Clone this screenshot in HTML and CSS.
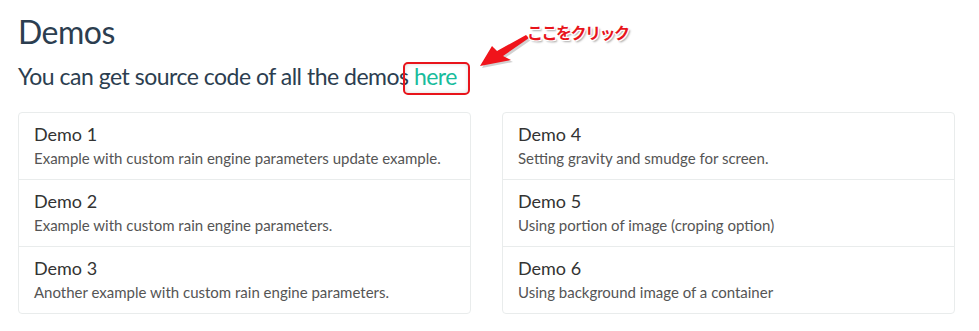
FILE: index.html
```html
<!DOCTYPE html>
<html lang="en">
<head>
  <meta charset="UTF-8">
  <title>Demos</title>
  <link rel="stylesheet" href="styles.css">
</head>
<body>
  <div class="page">
    <h1 class="title">Demos</h1>
    <h3 class="lead">You can get source code of all the demos <a href="#" class="src-link">here</a></h3>

    <div class="demo-grid">
      <!-- Left column -->
      <div class="list-group">
        <a href="#" class="list-item">
          <h4 class="item-heading">Demo 1</h4>
          <p class="item-text">Example with custom rain engine parameters update example.</p>
        </a>
        <a href="#" class="list-item">
          <h4 class="item-heading">Demo 2</h4>
          <p class="item-text">Example with custom rain engine parameters.</p>
        </a>
        <a href="#" class="list-item">
          <h4 class="item-heading">Demo 3</h4>
          <p class="item-text">Another example with custom rain engine parameters.</p>
        </a>
      </div>

      <!-- Right column -->
      <div class="list-group">
        <a href="#" class="list-item">
          <h4 class="item-heading">Demo 4</h4>
          <p class="item-text">Setting gravity and smudge for screen.</p>
        </a>
        <a href="#" class="list-item">
          <h4 class="item-heading">Demo 5</h4>
          <p class="item-text">Using portion of image (croping option)</p>
        </a>
        <a href="#" class="list-item">
          <h4 class="item-heading">Demo 6</h4>
          <p class="item-text">Using background image of a container</p>
        </a>
      </div>
    </div>

    <!-- Annotation overlay -->
    <div class="note-box"></div>
    <svg class="note-arrow" width="60" height="40" viewBox="475 32 60 40">
      <polygon class="arrow-shadow" points="482,68 494,48 499,53 528,37 531,40 505,58 513,62"/>
      <polygon class="arrow-fill" points="480,66 492,46 497,51 526,35 529,38 503,56 511,60"/>
    </svg>
    <span class="note-text">ここをクリック</span>
  </div>
</body>
</html>
```

FILE: styles.css
```css
/* General Styles */
body {
  margin: 0;
  background: #fff;
  font-family: Lato, "Noto Sans", sans-serif;
  color: #2c3e50;
}
.page {
  position: relative;
  padding: 0 24px 0 18px;
}
.title {
  margin: 0;
  padding-top: 12px;
  font-size: 32px;
  font-weight: 400;
  letter-spacing: -0.5px;
  line-height: 40px;
}
.lead {
  margin: 8px 0 0;
  font-size: 23px;
  font-weight: 400;
  letter-spacing: -0.5px;
  line-height: 32px;
}
.src-link {
  color: #18bc9c;
  text-decoration: none;
}

/* Demo lists */
.demo-grid {
  display: grid;
  grid-template-columns: 453px 453px;
  column-gap: 31px;
  margin-top: 20px;
}
.list-group {
  border: 1px solid #e9ecec;
  border-radius: 4px;
}
.list-item {
  display: block;
  padding: 11px 15px 10px;
  text-decoration: none;
  border-top: 1px solid #e9ecec;
}
.list-item:first-child {
  border-top: none;
}
.item-heading {
  margin: 0 0 4px;
  font-size: 18px;
  font-weight: 400;
  line-height: 20px;
  color: #333;
}
.item-text {
  margin: 0;
  font-size: 15px;
  line-height: 21px;
  color: #555;
}

/* Annotation */
.note-box {
  position: absolute;
  left: 403px;
  top: 62px;
  width: 63px;
  height: 29px;
  border: 2px solid #e8141b;
  border-radius: 5px;
  box-shadow: inset 0 0 4px rgba(0, 0, 0, 0.15);
}
.note-arrow {
  position: absolute;
  left: 475px;
  top: 32px;
}
.arrow-fill {
  fill: #f0141b;
}
.arrow-shadow {
  fill: rgba(0, 0, 0, 0.18);
}
.note-text {
  position: absolute;
  left: 527px;
  top: 21px;
  font-family: "Noto Sans CJK JP", sans-serif;
  font-size: 16px;
  font-weight: 700;
  letter-spacing: -1.5px;
  line-height: 22px;
  color: #e8141b;
  text-shadow: -1px -1px 0 #fff, 1px -1px 0 #fff, -1px 1px 0 #fff, 1px 1px 0 #fff, 2px 2px 2px rgba(0, 0, 0, 0.35);
}
```
